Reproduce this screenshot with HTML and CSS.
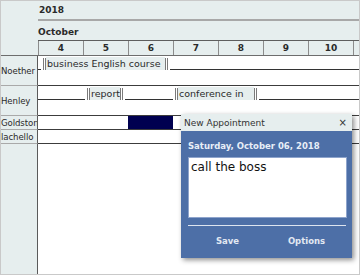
FILE: index.html
```html
<!DOCTYPE html>
<html lang="en">
<head>
    <meta charset="UTF-8">
    <title>Scheduler</title>
    <link rel="stylesheet" href="styles.css">
</head>
<body>
<div class="scheduler">
    <!-- timeline header -->
    <div class="head">
        <div class="corner"></div>
        <div class="head-lanes">
            <div class="year">2018</div>
            <div class="month">October</div>
            <div class="days">
                <div class="day">4</div>
                <div class="day">5</div>
                <div class="day">6</div>
                <div class="day">7</div>
                <div class="day">8</div>
                <div class="day">9</div>
                <div class="day">10</div>
                <div class="day"></div>
            </div>
        </div>
    </div>

    <!-- resources -->
    <div class="row tall">
        <div class="name">Noether</div>
        <div class="lane">
            <div class="strip">
                <span class="line w4"></span>
                <span class="bars"></span>
                <span class="label w119">business English course</span>
                <span class="bars"></span>
                <span class="line grow"></span>
            </div>
        </div>
    </div>
    <div class="row tall">
        <div class="name">Henley</div>
        <div class="lane">
            <div class="strip">
                <span class="line w47"></span>
                <span class="bars"></span>
                <span class="label w30">report</span>
                <span class="bars"></span>
                <span class="line w48"></span>
                <span class="bars"></span>
                <span class="label w75">conference in</span>
                <span class="bars"></span>
                <span class="line grow"></span>
            </div>
        </div>
    </div>
    <div class="row short">
        <div class="name">Goldston</div>
        <div class="lane">
            <div class="busy"></div>
        </div>
    </div>
    <div class="row short">
        <div class="name">lachello</div>
        <div class="lane"></div>
    </div>
    <div class="row filler">
        <div class="name"></div>
        <div class="lane"></div>
    </div>

    <!-- appointment dialog -->
    <div class="popup">
        <div class="popup-title">
            <span>New Appointment</span>
            <span class="close">&times;</span>
        </div>
        <div class="popup-body">
            <div class="date">Saturday, October 06, 2018</div>
            <textarea class="note">call the boss</textarea>
            <div class="actions">
                <button class="act">Save</button>
                <button class="act">Options</button>
            </div>
        </div>
    </div>
</div>
</body>
</html>
```

FILE: styles.css
```css
body{
    margin: 0;
}
.scheduler{
    position: relative;
    width: 360px;
    height: 275px;
    box-sizing: border-box;
    border: 1px solid #c9c9c9;
    display: flex;
    flex-direction: column;
    overflow: hidden;
    font-family: "DejaVu Sans", Verdana, sans-serif;
    font-size: 9px;
    color: #2a2a2a;
    background: #fff;
}

/* header */
.head{
    display: flex;
    background: #e6eeee;
    border-bottom: 1px solid #6d6d6d;
}
.corner{
    width: 37px;
    flex: none;
}
.head-lanes{
    flex: 1;
    overflow: hidden;
}
.year{
    height: 17px;
    line-height: 16px;
    padding-top: 1px;
    padding-left: 1px;
    border-bottom: 2px solid #a8a8a8;
    font-weight: bold;
}
.month{
    height: 17px;
    line-height: 19px;
    padding-top: 2px;
    border-bottom: 1px solid #5e5e5e;
    font-weight: bold;
}
.days{
    display: flex;
    height: 14px;
}
.day{
    flex: none;
    width: 45px;
    box-sizing: border-box;
    border-left: 1px solid #8c8c8c;
    text-align: center;
    line-height: 15px;
    font-weight: bold;
}

/* rows */
.row{
    display: flex;
}
.row.tall{
    height: 30px;
}
.row.short{
    height: 14px;
}
.row.filler{
    flex: 1;
}
.name{
    width: 37px;
    flex: none;
    box-sizing: border-box;
    background: #e6eeee;
    border-right: 1px solid #5a5a5a;
    border-bottom: 1px solid #a9a9a9;
    display: flex;
    align-items: center;
    white-space: nowrap;
    overflow: hidden;
    font-size: 8.6px;
    letter-spacing: -0.1px;
}
.lane{
    flex: 1;
    border-bottom: 1px solid #3c3c3c;
    padding-top: 1px;
}
.filler .name,
.filler .lane{
    border-bottom: 0;
}

/* event strip */
.strip{
    display: flex;
    align-items: flex-end;
    height: 13px;
}
.line{
    height: 12px;
    border-bottom: 1px solid #333;
    margin: 0 2px 0 2px;
    flex: none;
}
.line.grow{
    flex: 1;
    margin-right: 0;
}
.w4{ width: 3px; margin-left: 0; }
.w47{ width: 47px; margin-left: 0; }
.w48{ width: 48px; }
.bars{
    width: 1px;
    height: 12px;
    border-left: 1px solid #7a7a7a;
    border-right: 1px solid #7a7a7a;
    flex: none;
}
.label{
    flex: none;
    height: 13px;
    line-height: 13px;
    background: #e6eeee;
    padding-left: 1px;
    box-sizing: border-box;
    white-space: nowrap;
    overflow: hidden;
    font-size: 9.5px;
}
.w119{ width: 119px; }
.w30{ width: 30px; }
.w75{ width: 76px; }

.busy{
    width: 45px;
    height: 13px;
    margin: -1px 0 0 90px;
    background: #000050;
}

/* popup */
.popup{
    position: absolute;
    left: 180px;
    top: 113px;
    width: 171px;
    height: 144px;
    display: flex;
    flex-direction: column;
    box-shadow: 2px 2px 5px rgba(0, 0, 0, 0.45);
}
.popup-title{
    height: 17px;
    background: #e6eeee;
    display: flex;
    justify-content: space-between;
    align-items: center;
    padding: 0 5px 0 3px;
    color: #333;
}
.close{
    font-size: 10px;
}
.popup-body{
    flex: 1;
    background: #4d6fa7;
    padding: 9px 5px 0 7px;
    display: flex;
    flex-direction: column;
}
.date{
    color: #e8eef7;
    font-weight: bold;
    font-size: 8.5px;
    line-height: 12px;
}
.note{
    margin-top: 5px;
    width: 159px;
    height: 61px;
    box-sizing: border-box;
    border: 1px solid #8ea4cc;
    padding: 2px 2px;
    resize: none;
    overflow: hidden;
    font-family: "DejaVu Sans", Verdana, sans-serif;
    font-size: 12px;
    color: #111;
    background: #fff;
}
.actions{
    margin-top: 7px;
    width: 158px;
    border-top: 1px solid #dde4ef;
    display: flex;
}
.act{
    flex: 1;
    height: 30px;
    border: 0;
    background: none;
    color: #e2e8f2;
    font-family: "DejaVu Sans", Verdana, sans-serif;
    font-weight: bold;
    font-size: 8.5px;
    padding: 0;
}
```
